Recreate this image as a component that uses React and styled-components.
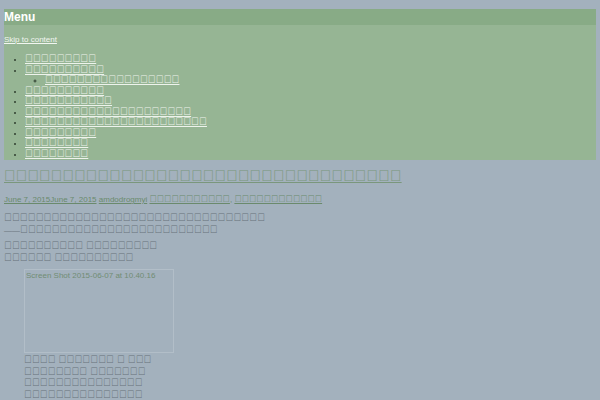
import React from "react";
import styled, { createGlobalStyle } from "styled-components";

const t = (n, o = 0) =>
  Array.from({ length: n }, (_, i) => String.fromCodePoint(0xf0000 + o * 7 + i)).join("");

const GlobalStyle = createGlobalStyle`
  html, body { margin: 0; padding: 0; }
  body {
    background: #a3b1bd;
    font-family: "Liberation Sans", Arial, sans-serif;
  }
`;

const Page = styled.div`
  padding: 9px 4px 0;
`;

const Nav = styled.nav`
  background: #96b594;
  padding-bottom: 1px;
`;

const MenuTitle = styled.h2`
  margin: 0;
  background: #88ab86;
  color: #ffffff;
  font-size: 12px;
  font-weight: bold;
  line-height: 16px;
  height: 16px;
`;

const Skip = styled.a`
  display: inline-block;
  margin-top: 10px;
  color: #f2f6f1;
  font-size: 8px;
  line-height: 10.5px;
`;

const Tofu = styled.span`
  font-size: ${(p) => p.$s || "1.32em"};
  line-height: 0;
`;

const MenuList = styled.ul`
  margin: ${(p) => (p.$sub ? "0" : "9px 0 -1px")};
  padding-left: ${(p) => (p.$sub ? "20px" : "21px")};
  list-style: ${(p) => (p.$sub ? "circle" : "disc")};
  color: #2f3f2f;
`;

const MenuItem = styled.li`
  font-size: 8px;
  line-height: 10.5px;
`;

const MenuLink = styled.a`
  color: #eef3ec;
`;

const Title = styled.h1`
  margin: 10px 0 0;
  font-size: 12px;
  font-weight: normal;
  line-height: 14px;
`;

const TitleLink = styled.a`
  color: #7a977c;
`;

const Meta = styled.div`
  margin-top: 11px;
  font-size: 8px;
  line-height: 10px;
  color: #6a8a6c;
`;

const MetaLink = styled.a`
  color: #6a8a6c;
`;

const Para = styled.p`
  margin: ${(p) => p.$m || "8px 0 0"};
  font-size: 8px;
  line-height: 12px;
  color: #67717b;
`;

const Figure = styled.figure`
  margin: 4px 0 0 20px;
  width: 150px;
`;

const ImageBox = styled.div`
  box-sizing: border-box;
  width: 150px;
  height: 84px;
  border: 1px solid #b2bec8;
  padding: 1px 0 0 1px;
  font-size: 8px;
  line-height: 10px;
  color: #718d74;
`;

const Caption = styled.figcaption`
  margin-top: 2px;
  font-size: 8px;
  line-height: 11.5px;
  color: #67717b;
`;

const menu = [
  { n: 9 },
  { n: 10, sub: [17] },
  { n: 10 },
  { n: 11 },
  { n: 21 },
  { n: 23 },
  { n: 9 },
  { n: 8 },
  { n: 8 },
];

export default function App() {
  return (
    <>
      <GlobalStyle />
      <Page>
        <Nav>
          <MenuTitle>Menu</MenuTitle>
          <Skip href="#content">Skip to content</Skip>
          <MenuList>
            {menu.map((m, i) => (
              <MenuItem key={i}>
                <MenuLink href="#">
                  <Tofu>{t(m.n, i * 3)}</Tofu>
                </MenuLink>
                {m.sub && (
                  <MenuList $sub>
                    {m.sub.map((s, j) => (
                      <MenuItem key={j}>
                        <MenuLink href="#">
                          <Tofu>{t(s, 5)}</Tofu>
                        </MenuLink>
                      </MenuItem>
                    ))}
                  </MenuList>
                )}
              </MenuItem>
            ))}
          </MenuList>
        </Nav>
        <Title>
          <TitleLink href="#">
            <Tofu $s="1.3em">{t(34, 1)}</Tofu>
          </TitleLink>
        </Title>
        <Meta>
          <MetaLink href="#">June 7, 2015June 7, 2015</MetaLink>{" "}
          <MetaLink href="#">amdodrogmyi</MetaLink>{" "}
          <MetaLink href="#">
            <Tofu $s="1.22em">{t(11, 2)}</Tofu>
          </MetaLink>
          ,{" "}
          <MetaLink href="#">
            <Tofu $s="1.22em">{t(12, 9)}</Tofu>
          </MetaLink>
        </Meta>
        <Para id="content">
          <Tofu>{t(33, 1)}</Tofu>
          <br />
          ——<Tofu>{t(25, 6)}</Tofu>
        </Para>
        <Para $m="4px 0 0">
          <Tofu>
            {t(10, 3)} {t(9, 14)}
          </Tofu>
          <br />
          <Tofu>
            {t(6, 20)} {t(10, 8)}
          </Tofu>
        </Para>
        <Figure>
          <ImageBox>Screen Shot 2015-06-07 at 10.40.16</ImageBox>
          <Caption>
            <Tofu>
              {t(4, 1)} {t(7, 6)} {t(1, 12)} {t(3, 15)} {t(8, 19)} {t(7, 2)}{" "}
              {t(15, 10)} {t(15, 3)} {t(16, 13)}
            </Tofu>
          </Caption>
        </Figure>
      </Page>
    </>
  );
}
